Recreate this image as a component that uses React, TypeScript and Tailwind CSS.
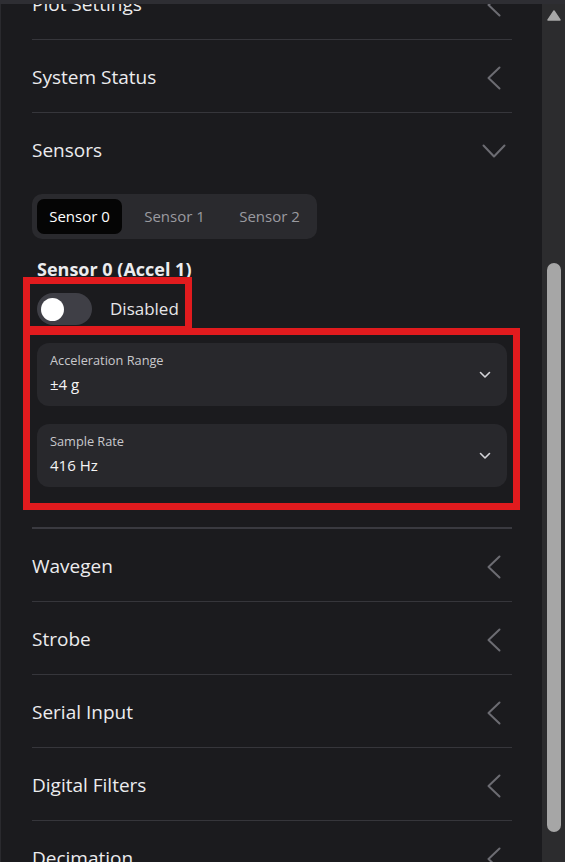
import { ReactNode } from "react";

const Chevron = ({ down = false, className = "" }: { down?: boolean; className?: string }) => (
  <svg
    width="14"
    height="24"
    viewBox="0 0 14 24"
    fill="none"
    stroke="currentColor"
    strokeWidth="2"
    strokeLinecap="round"
    strokeLinejoin="round"
    className={`${down ? "-rotate-90" : ""} ${className}`}
  >
    <path d="M12.5 1.5 L1.5 12 L12.5 22.5" />
  </svg>
);

const SmallChevron = () => (
  <svg width="12" height="8" viewBox="0 0 12 8" fill="none" stroke="#d4d4d8" strokeWidth="1.6" strokeLinecap="round" strokeLinejoin="round">
    <path d="M1.5 1.5 L6 6 L10.5 1.5" />
  </svg>
);

const Row = ({ title, children, thick = false }: { title: string; children?: ReactNode; thick?: boolean }) => (
  <div className={thick ? "border-b-2 border-[#3a3a40]" : "border-b border-[#36363b]"}>
    <div className="flex h-[72px] items-center justify-between pt-[3px] pr-[11px]">
      <span className="text-[19px] text-[#ececee]">{title}</span>
      <Chevron className="text-[#6c6c72]" />
    </div>
    {children}
  </div>
);

const SelectCard = ({ label, value }: { label: string; value: string }) => (
  <div className="flex h-[63px] items-center justify-between rounded-[12px] bg-[#28282c] pr-[16px] pl-[13px]">
    <div className="mb-[4px] flex flex-col gap-[4px]">
      <span className="text-[12.75px] leading-[18px] text-[#c8c8cc]">{label}</span>
      <span className="text-[15px] leading-[22px] text-[#f4f4f5]">{value}</span>
    </div>
    <SmallChevron />
  </div>
);

export default function App() {
  return (
    <div
      className="flex h-[862px] w-[565px] overflow-hidden border-t-4 border-[#2e2e33] bg-[#1b1b1e]"
      style={{ fontFamily: '"Open Sans", "Noto Sans", sans-serif' }}
    >
      <div className="relative flex-1 overflow-hidden border-l border-[#2a2a2e]">
        <div className="-mt-[37px] pr-[30px] pl-[31px]">
          <Row title="Plot Settings" />
          <Row title="System Status" />

          {/* expanded sensors section */}
          <div className="border-b-2 border-[#3a3a40]">
            <div className="flex h-[72px] items-center justify-between pt-[3px] pr-[11px]">
              <span className="text-[19px] text-[#ececee]">Sensors</span>
              <Chevron down className="text-[#6c6c72]" />
            </div>
            <div className="pt-[9px] pb-[40px]">
              <div className="flex w-fit gap-[10px] rounded-[10px] bg-[#2a2a2e] p-[5px]">
                <div className="flex h-[35px] w-[85px] items-center justify-center rounded-[7px] bg-[#050505] text-[15px] text-white">
                  Sensor 0
                </div>
                <div className="flex h-[35px] w-[85px] items-center justify-center text-[15px] text-[#9a9aa0]">
                  Sensor 1
                </div>
                <div className="flex h-[35px] w-[85px] items-center justify-center text-[15px] text-[#9a9aa0]">
                  Sensor 2
                </div>
              </div>
              <div className="px-[5px]">
                <div className="mt-[18px] text-[18px] leading-[24px] font-bold text-[#ececee]">Sensor 0 (Accel 1)</div>
                <div className="mt-[12px] flex items-center gap-[18px]">
                  <div className="flex h-[32px] w-[55px] items-center rounded-full bg-[#3f3f46] px-[4px]">
                    <div className="h-[23px] w-[23px] rounded-full bg-white" />
                  </div>
                  <span className="text-[17px] text-[#e6e6e8]">Disabled</span>
                </div>
                <div className="mt-[18px] flex flex-col gap-[18px]">
                  <SelectCard label="Acceleration Range" value="±4 g" />
                  <SelectCard label="Sample Rate" value="416 Hz" />
                </div>
              </div>
            </div>
          </div>

          <Row title="Wavegen" />
          <Row title="Strobe" />
          <Row title="Serial Input" />
          <Row title="Digital Filters" />
          <Row title="Decimation" />
        </div>

        {/* highlight boxes */}
        <div className="pointer-events-none absolute top-[273px] left-[22px] h-[56px] w-[169px] border-[7px] border-[#e11b1e]" />
        <div className="pointer-events-none absolute top-[324px] left-[22px] h-[182px] w-[497px] border-[7px] border-[#e11b1e]" />
      </div>

      {/* scrollbar */}
      <div className="flex w-[23px] flex-col bg-[#2c2c2e] pl-[5px]">
        <svg width="14" height="11" viewBox="0 0 14 11" className="mt-[6px]">
          <path d="M7 1 L13 10 L1 10 Z" fill="#a8a8a8" stroke="#a8a8a8" strokeWidth="1.5" strokeLinejoin="round" />
        </svg>
        <div className="mt-[242px] h-[569px] w-[14px] rounded-full bg-[#a6a6a6]" />
      </div>
    </div>
  );
}
